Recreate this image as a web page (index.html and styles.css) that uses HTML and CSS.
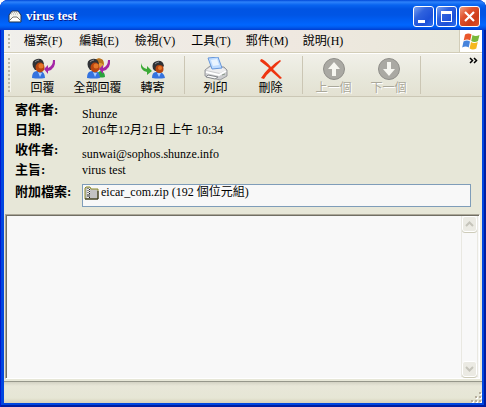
FILE: index.html
```html
<!DOCTYPE html>
<html lang="zh-Hant">
<head>
    <meta charset="UTF-8">
    <title>virus test</title>
    <meta name="viewport" content="width=device-width, initial-scale=1.0">
    <link rel="stylesheet" href="styles.css">
</head>
<body>
    <div class="window">
        <header class="titlebar">
            <svg class="title-icon" width="14" height="13" viewBox="0 0 14 13">
                <path d="M1 5 L4 1 H10 L13 5 V12 H1z" fill="#f4f4ee" stroke="#25344f"/>
                <path d="M3 4h8M4 2.500h6" stroke="#b5b5ae" stroke-dasharray="1 1"/>
                <path d="M1 11 L5 7 H9 L13 11" fill="#fff" stroke="#77776f"/>
            </svg>
            <h1>virus test</h1>
            <div class="window-buttons">
                <button type="button" aria-label="最小化">
                    <svg width="19" height="19" viewBox="0 0 19 19"><path d="M4 13h7v3H4z" fill="#fff"/></svg>
                </button>
                <button type="button" aria-label="最大化">
                    <svg width="19" height="19" viewBox="0 0 19 19"><path d="M4 4h11v11H4zM5 7v7h9V7z" fill="#fff" fill-rule="evenodd"/></svg>
                </button>
                <button type="button" class="close" aria-label="關閉">
                    <svg width="19" height="19" viewBox="0 0 19 19"><path d="M5 5l9 9M14 5l-9 9" stroke="#fff" stroke-width="2.200"/></svg>
                </button>
            </div>
        </header>

        <div class="client">
            <nav class="menubar">
                <span class="grip"></span>
                <button type="button">檔案(F)</button>
                <button type="button">編輯(E)</button>
                <button type="button">檢視(V)</button>
                <button type="button">工具(T)</button>
                <button type="button">郵件(M)</button>
                <button type="button">說明(H)</button>
                <span class="flag">
                    <svg width="20" height="19" viewBox="0 0 20 19">
                        <path d="M4 2.500q3.500-2 6.500 0l-1.300 6q-3-2-6.500 0z" fill="#e9572b"/>
                        <path d="M11.500 3q3 2 7 0l-1.500 6q-3.500 2-6.800 0z" fill="#79b83a"/>
                        <path d="M2.500 9.500q3.500-2 6.500 0l-1.300 6q-3-2-6.500 0z" fill="#4684dc"/>
                        <path d="M10 10q3 2 6.800 0l-1.500 6.500q-3.500 2-6.700 0z" fill="#f5b820"/>
                    </svg>
                </span>
            </nav>

            <div class="toolbar">
                <span class="grip"></span>
                <button type="button">
                    <svg width="26" height="24" viewBox="0 0 26 24">
                        <path d="M2 21q0-7 5-7h3q5 1 5 7-6 1-13 0z" fill="#3473df"/>
                        <path d="M8 15l2 5 2-4z" fill="#a9ccff"/>
                        <path d="M3 10Q1 3 7 2q6-1 7 5l-6 6H5z" fill="#303236"/>
                        <path d="M5 5q2-2 4-2" stroke="#8b9096" fill="none"/>
                        <ellipse cx="10" cy="10.500" rx="4.500" ry="5" fill="#b8460f"/>
                        <ellipse cx="11" cy="9" rx="2.500" ry="2.500" fill="#e5782a"/>
                        <path d="M25 3q1 9-7 11v3l-4-5 4-4v3q5-2 5-8z" fill="#a526a6"/>
                    </svg>
                    <span>回覆</span>
                </button>
                <button type="button">
                    <svg width="26" height="24" viewBox="0 0 26 24">
                        <path d="M12 20q0-6 4-6 4 1 4 6-4 1-8 0z" fill="#28a43b"/>
                        <ellipse cx="14" cy="7" rx="5" ry="5.500" fill="#e0a040"/>
                        <path d="M9 4q4-5 9-1l1 5q-4-4-10-1z" fill="#b87320"/>
                        <path d="M2 21q0-7 5-7h3q5 1 5 7-6 1-13 0z" fill="#3473df"/>
                        <path d="M8 15l2 5 2-4z" fill="#a9ccff"/>
                        <path d="M3 10Q1 3 7 2q6-1 7 5l-6 6H5z" fill="#303236"/>
                        <path d="M5 5q2-2 4-2" stroke="#8b9096" fill="none"/>
                        <ellipse cx="10" cy="10.500" rx="4.500" ry="5" fill="#b8460f"/>
                        <ellipse cx="11" cy="9" rx="2.500" ry="2.500" fill="#e5782a"/>
                        <path d="M25 3q1 9-7 11v3l-4-5 4-4v3q5-2 5-8z" fill="#a526a6"/>
                    </svg>
                    <span>全部回覆</span>
                </button>
                <button type="button">
                    <svg width="26" height="24" viewBox="0 0 26 24">
                        <path d="M1 6q1 5 6 6V9l5 5-5 4v-3q-7-1-6-9z" fill="#3baa35"/>
                        <path d="M12 21q0-6 4-6h4q4 1 5 6-6 1-13 0z" fill="#3473df"/>
                        <path d="M17 16l2 4 2-4z" fill="#a9ccff"/>
                        <path d="M13 12q-2-7 4-8 6-1 7 5l-5 5h-4z" fill="#303236"/>
                        <path d="M15 7q2-2 4-2" stroke="#8b9096" fill="none"/>
                        <ellipse cx="19.500" cy="12" rx="4" ry="4" fill="#b8460f"/>
                        <ellipse cx="20" cy="11" rx="2" ry="2" fill="#e5782a"/>
                    </svg>
                    <span>轉寄</span>
                </button>
                <span class="separator"></span>
                <button type="button">
                    <svg width="26" height="24" viewBox="0 0 26 24">
                        <path d="M2 13l5-4 14 1 3 3v6l-7 4-15-4z" fill="#cbccce" stroke="#97999d"/>
                        <path d="M3 13l5-3 12 1 3 2-6 3z" fill="#eeeeef"/>
                        <path d="M5 1l10-1 4 11-10 1z" fill="#bfdcff" stroke="#6696da"/>
                        <path d="M8 3l6-1 2 6-6 1z" fill="#eaf4ff"/>
                        <path d="M3 15l13 3 7-4" fill="none" stroke="#fff" stroke-width="2"/>
                        <path d="M5 18l10 2-3 2-9-2z" fill="#fafafa" stroke="#85888c"/>
                        <path d="M19 18l3-1" stroke="#8a9a8a"/>
                    </svg>
                    <span>列印</span>
                </button>
                <button type="button">
                    <svg width="26" height="24" viewBox="0 0 26 24">
                        <path d="M3 2q3 0 10 8 5-5 9-7l1 1-8 8 9 9-2 1-9-8q-4 3-7 8l-3-1q3-5 8-10L2 4z" fill="#ee3510"/>
                    </svg>
                    <span>刪除</span>
                </button>
                <span class="separator"></span>
                <button type="button" disabled>
                    <svg width="26" height="24" viewBox="0 0 26 24">
                        <circle cx="13" cy="12" r="10.500" fill="#aaa9a3" stroke="#8f8e89"/>
                        <path d="M13 5l6 7h-4v7h-4v-7H7z" fill="#f6f6f0"/>
                    </svg>
                    <span>上一個</span>
                </button>
                <button type="button" disabled>
                    <svg width="26" height="24" viewBox="0 0 26 24">
                        <circle cx="13" cy="12" r="10.500" fill="#aaa9a3" stroke="#8f8e89"/>
                        <path d="M13 19l6-7h-4V5h-4v7H7z" fill="#f6f6f0"/>
                    </svg>
                    <span>下一個</span>
                </button>
                <span class="separator"></span>
                <button type="button" class="more" aria-label="其他按鈕">
                    <svg width="9" height="7" viewBox="0 0 9 7"><path d="M1 1l2.500 2.500L1 6M5 1l2.500 2.500L5 6" fill="none" stroke="#000" stroke-width="1.500"/></svg>
                </button>
            </div>

            <dl class="headers">
                <div class="row address"><dt>寄件者:</dt><dd>Shunze</dd></div>
                <div class="row"><dt>日期:</dt><dd>2016年12月21日 上午 10:34</dd></div>
                <div class="row address"><dt>收件者:</dt><dd>sunwai@sophos.shunze.info</dd></div>
                <div class="row"><dt>主旨:</dt><dd>virus test</dd></div>
                <div class="row attachments">
                    <dt>附加檔案:</dt>
                    <dd>
                        <a href="#">
                            <svg width="15" height="14" viewBox="0 0 15 14">
                                <path d="M1 13V2l1-1h4l1 2h7v10z" fill="#c3c3c3" stroke="#8b8a27"/>
                                <path d="M1 13h13V5" fill="none" stroke="#222"/>
                                <path d="M3 2h3v10H3z" fill="#eee"/>
                                <path d="M4 2v10M5.500 3v9" stroke="#222" stroke-dasharray="1 1"/>
                                <path d="M3 8h3v3H3z" fill="#888"/>
                            </svg>
                            <span>eicar_com.zip (192 個位元組)</span>
                        </a>
                    </dd>
                </div>
            </dl>

            <main class="message">
                <textarea aria-label="郵件內容" readonly></textarea>
                <div class="scrollbar">
                    <button type="button" disabled aria-label="向上捲動">
                        <svg width="9" height="6" viewBox="0 0 9 6"><path d="M1 5l3.500-3.500L8 5" fill="none" stroke="#c5c4ba" stroke-width="2"/></svg>
                    </button>
                    <button type="button" disabled aria-label="向下捲動">
                        <svg width="9" height="6" viewBox="0 0 9 6"><path d="M1 1l3.500 3.500L8 1" fill="none" stroke="#c5c4ba" stroke-width="2"/></svg>
                    </button>
                </div>
            </main>

            <footer class="statusbar">
                <svg width="12" height="12" viewBox="0 0 12 12">
                    <path d="M10 2h2v2h-2zM6 6h2v2H6zM10 6h2v2h-2zM2 10h2v2H2zM6 10h2v2H6zM10 10h2v2h-2z" fill="#fff"/>
                    <path d="M9 1h2v2H9zM5 5h2v2H5zM9 5h2v2H9zM1 9h2v2H1zM5 9h2v2H5zM9 9h2v2H9z" fill="#b5ad9c"/>
                </svg>
            </footer>
        </div>
    </div>
</body>
</html>
```

FILE: styles.css
```css
* {
    box-sizing: border-box;
}
body {
    margin: 0;
    background: #fff;
    color: #000;
    font-family: "Liberation Serif", "Noto Sans CJK TC", serif;
    font-size: 12px;
    line-height: 16px;
}
button {
    padding: 0;
    border: 0;
    background: none;
    color: inherit;
    font: inherit;
}
svg {
    display: block;
    flex: none;
}
.window {
    display: flex;
    flex-direction: column;
    min-height: 100vh;
    padding: 0 4px 4px;
    border-radius: 8px 8px 0 0;
    background: #0046e0;
    box-shadow: inset 1px 0 #0019cf, inset -2px -2px #001ea0;
    overflow: hidden;
}

/* Title bar */
.titlebar {
    display: flex;
    align-items: center;
    height: 30px;
    margin: 0 -4px;
    padding: 2px 6px 0 8px;
    background: linear-gradient(#0048d8 0, #2d82fa 2px, #0864f0 5px, #0054e3 9px, #0055e5 15px, #0066ff 25px, #005cf0 27px, #003dd0 30px);
}
.titlebar h1 {
    flex: 1;
    margin: 0 0 0 4px;
    color: #fff;
    font-size: 13px;
    text-shadow: 1px 1px #0a1883;
}
.window-buttons {
    display: flex;
    gap: 2px;
}
.window-buttons button {
    width: 21px;
    height: 21px;
    border: 1px solid #fff;
    border-radius: 3px;
    background: linear-gradient(135deg, #7ba2f0, #2f62de 35%, #1c50d8 70%, #2e70ed);
}
.window-buttons .close {
    background: linear-gradient(135deg, #f0a084, #e0532e 35%, #cd3c18 70%, #dc542c);
}

/* Menu and toolbar */
.client {
    display: flex;
    flex: 1;
    flex-direction: column;
    background: #e7e7d8;
}
.grip {
    align-self: stretch;
    width: 3px;
    margin: 4px;
    background: repeating-linear-gradient(#b7b5a7 0, #b7b5a7 2px, transparent 2px, transparent 4px);
    border-right: 1px solid #f5f4ed;
}
.menubar {
    display: flex;
    align-items: center;
    height: 23px;
    border-bottom: 1px solid #d2cdb8;
    background: linear-gradient(90deg, #f0efeb, #efe8e0 60%, #e8e8d9);
}
.menubar button {
    width: 56px;
    white-space: nowrap;
}
.flag {
    display: flex;
    align-items: center;
    justify-content: center;
    align-self: stretch;
    width: 23px;
    margin-left: auto;
    border-left: 1px solid #d2cdb8;
    background: #fff;
}
.toolbar {
    display: flex;
    align-items: center;
    height: 44px;
    border-top: 1px solid #fff;
    border-bottom: 1px solid #cbc7b5;
    background: linear-gradient(#f1f0e9, #e7e7da 60%, #e3e1d2);
}
.toolbar button {
    display: flex;
    flex-direction: column;
    align-items: center;
    width: 55px;
    padding-top: 3px;
}
.toolbar button span {
    margin-top: -1px;
    white-space: nowrap;
}
.toolbar button:disabled {
    color: #aaa89a;
    text-shadow: 1px 1px #fff;
}
.separator {
    align-self: stretch;
    width: 1px;
    margin: 2px 3px 2px 4px;
    background: #cbc6b4;
}
.toolbar .more {
    align-self: flex-start;
    width: 9px;
    margin: 0 4px 0 auto;
}

/* Message headers */
.headers {
    margin: 0;
    padding: 3px 11px 7px;
}
.row {
    display: flex;
    align-items: center;
    height: 20px;
}
.row dt {
    width: 67px;
    font-size: 13px;
    font-weight: bold;
    white-space: nowrap;
}
.row dd {
    flex: 1;
    margin: 0;
    line-height: 12px;
}
.address dd {
    align-self: flex-end;
}
.attachments {
    align-items: flex-start;
    height: auto;
    margin-top: 4px;
}
.attachments dd {
    height: 23px;
    padding: 1px;
    border: 1px solid #7f9db9;
    background: #f8f8f8;
}
.attachments a {
    display: flex;
    gap: 2px;
    color: inherit;
    text-decoration: none;
}

/* Message body */
.message {
    display: flex;
    flex: 1;
    margin: 0 2px 2px 1px;
    border: 1px solid #aca899;
    border-right-color: #fff;
    border-bottom-color: #fff;
    box-shadow: inset 1px 1px #716f64;
    background: #f8f8f8;
    padding: 1px;
}
.message textarea {
    flex: 1;
    min-width: 0;
    padding: 4px;
    border: 0;
    outline: 0;
    background: transparent;
    font: inherit;
    resize: none;
}
.scrollbar {
    display: flex;
    flex-direction: column;
    justify-content: space-between;
    width: 17px;
    border: 1px solid #e9e8e1;
    border-width: 0 1px;
}
.scrollbar button {
    display: flex;
    align-items: center;
    justify-content: center;
    height: 16px;
    border: 1px solid #fff;
    border-radius: 3px;
    background: #ebeae3;
    box-shadow: 0 1px #cdcbb9;
}

/* Status bar */
.statusbar {
    display: flex;
    align-items: flex-end;
    justify-content: flex-end;
    height: 22px;
    border-top: 1px solid #96978b;
    background: linear-gradient(#d3d2c4, #e8e7d9 4px, #e6e6d5 16px, #d6d1ba);
}
```
